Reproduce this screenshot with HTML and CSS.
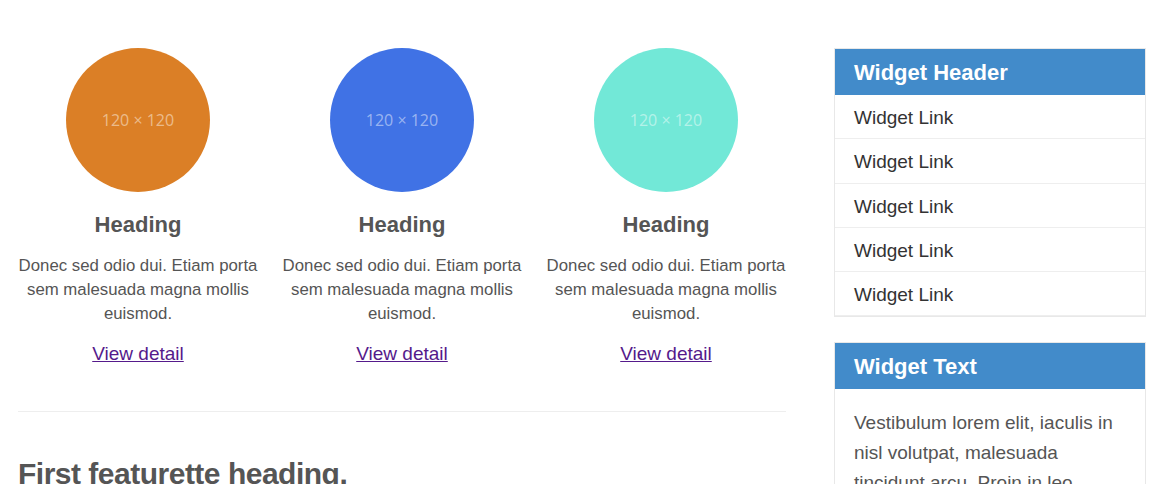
FILE: index.html
```html
<!DOCTYPE html>
<html lang="en">
<head>
<meta charset="utf-8">
<title>Marketing</title>
<link rel="stylesheet" href="styles.css">
</head>
<body>
<div class="page">
  <main class="main">
    <div class="features">
      <div class="feature">
        <div class="thumb thumb-orange"><span>120 × 120</span></div>
        <h2 class="feature-title">Heading</h2>
        <p class="feature-text">Donec sed odio dui. Etiam porta sem malesuada magna mollis euismod.</p>
        <p class="feature-link"><a href="#">View detail</a></p>
      </div>
      <div class="feature">
        <div class="thumb thumb-blue"><span>120 × 120</span></div>
        <h2 class="feature-title">Heading</h2>
        <p class="feature-text">Donec sed odio dui. Etiam porta sem malesuada magna mollis euismod.</p>
        <p class="feature-link"><a href="#">View detail</a></p>
      </div>
      <div class="feature">
        <div class="thumb thumb-teal"><span>120 × 120</span></div>
        <h2 class="feature-title">Heading</h2>
        <p class="feature-text">Donec sed odio dui. Etiam porta sem malesuada magna mollis euismod.</p>
        <p class="feature-link"><a href="#">View detail</a></p>
      </div>
    </div>
    <hr class="divider">
    <h2 class="featurette-heading">First featurette heading.</h2>
  </main>
  <aside class="sidebar">
    <section class="widget">
      <h3 class="widget-header">Widget Header</h3>
      <ul class="widget-links">
        <li><a href="#">Widget Link</a></li>
        <li><a href="#">Widget Link</a></li>
        <li><a href="#">Widget Link</a></li>
        <li><a href="#">Widget Link</a></li>
        <li><a href="#">Widget Link</a></li>
      </ul>
    </section>
    <section class="widget">
      <h3 class="widget-header">Widget Text</h3>
      <p class="widget-body">Vestibulum lorem elit, iaculis in nisl volutpat, malesuada tincidunt arcu. Proin in leo fringilla, vestibulum mi porta, faucibus felis. Integer pharetra est nunc, nec pretium nunc pretium ac.</p>
    </section>
  </aside>
</div>
</body>
</html>
```

FILE: styles.css
```css
html, body {
  margin: 0;
  padding: 0;
  background: #fff;
}

body {
  font-family: "Liberation Sans", Arial, sans-serif;
  color: #555;
  overflow: hidden;
  height: 484px;
}

.page {
  display: grid;
  grid-template-columns: 768px 312px;
  column-gap: 48px;
  padding: 48px 0 0 18px;
  align-items: start;
}

.features {
  display: grid;
  grid-template-columns: repeat(3, 240px);
  column-gap: 24px;
}

.feature {
  text-align: center;
}

.thumb {
  width: 144px;
  height: 144px;
  border-radius: 50%;
  margin: 0 auto;
  display: flex;
  align-items: center;
  justify-content: center;
}

.thumb span {
  font-family: "Open Sans", sans-serif;
  font-size: 16px;
  color: rgba(255, 255, 255, 0.48);
}

.thumb-orange { background: #db7f26; }
.thumb-blue { background: #4072e5; }
.thumb-teal { background: #72e8d7; }

.feature-title {
  margin: 21px 0 0;
  font-size: 22px;
  line-height: 24px;
  font-weight: bold;
  color: #555;
}

.feature-text {
  margin: 17px 0 0;
  font-size: 16.8px;
  line-height: 24px;
}

.feature-link {
  margin: 16px 0 0;
  font-size: 19px;
  line-height: 24px;
}

.feature-link a {
  color: #551a8b;
  text-decoration: underline;
}

.divider {
  border: 0;
  border-top: 1px solid #eee;
  margin: 45px 0 0;
  height: 0;
}

.featurette-heading {
  margin: 45px 0 0;
  font-size: 30px;
  line-height: 33px;
  letter-spacing: -0.5px;
  font-weight: bold;
  color: #555;
}

.widget {
  border: 1px solid #e8e8e8;
  margin-bottom: 25px;
}

.widget-header {
  margin: 0;
  background: #428bca;
  color: #fff;
  font-size: 22px;
  font-weight: bold;
  height: 45px;
  line-height: 46px;
  padding: 1px 19px 0;
}

.widget-links {
  list-style: none;
  margin: 0;
  padding: 0;
}

.widget-links li {
  border-bottom: 1px solid #eee;
  padding: 11px 19px 9px;
  font-size: 19px;
  line-height: 23.25px;
}

.widget-links a {
  color: #333;
  text-decoration: none;
}

.widget-body {
  margin: 0;
  padding: 19px 19px 18px;
  font-size: 19px;
  line-height: 30px;
  color: #555;
}
```
